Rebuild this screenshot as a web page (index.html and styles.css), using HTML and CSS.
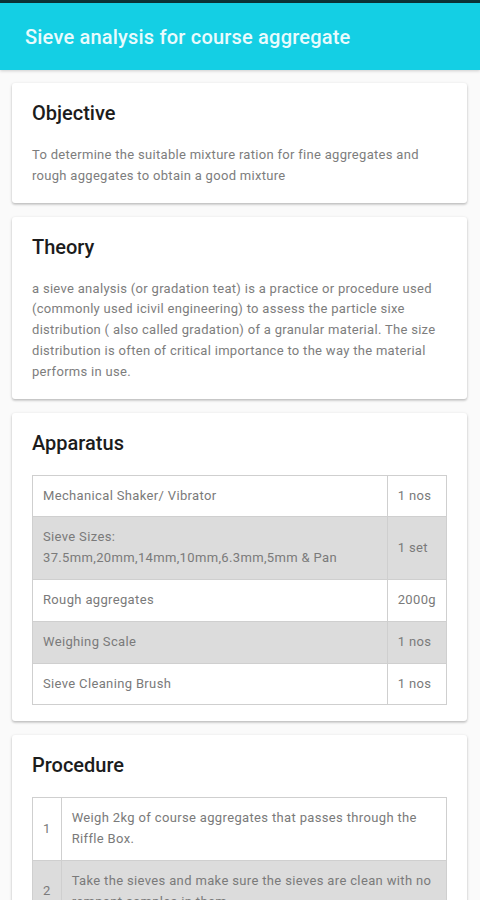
FILE: index.html
```html
<!DOCTYPE html>
<html>
<head>
<meta charset="utf-8">
<link rel="stylesheet" href="styles.css">
</head>
<body>
<div class="status"></div>
<header class="appbar"><h1 class="title">Sieve analysis for course aggregate</h1></header>
<main class="content">
  <section class="card">
    <h2 class="card-title">Objective</h2>
    <p class="card-text">To determine the suitable mixture ration for fine aggregates and rough aggegates to obtain a good mixture</p>
  </section>
  <section class="card">
    <h2 class="card-title">Theory</h2>
    <p class="card-text">a sieve analysis (or gradation teat) is a practice or procedure used (commonly used icivil engineering) to assess the particle sixe distribution ( also called gradation) of a granular material. The size distribution is often of critical importance to the way the material performs in use.</p>
  </section>
  <section class="card card-apparatus">
    <h2 class="card-title">Apparatus</h2>
    <table class="grid">
      <tr><td>Mechanical Shaker/ Vibrator</td><td class="qty">1 nos</td></tr>
      <tr><td>Sieve Sizes:<br>37.5mm,20mm,14mm,10mm,6.3mm,5mm &amp; Pan</td><td class="qty">1 set</td></tr>
      <tr><td>Rough aggregates</td><td class="qty">2000g</td></tr>
      <tr><td>Weighing Scale</td><td class="qty">1 nos</td></tr>
      <tr><td>Sieve Cleaning Brush</td><td class="qty">1 nos</td></tr>
    </table>
  </section>
  <section class="card">
    <h2 class="card-title">Procedure</h2>
    <table class="grid steps">
      <tr><td class="num">1</td><td>Weigh 2kg of course aggregates that passes through the Riffle Box.</td></tr>
      <tr><td class="num">2</td><td>Take the sieves and make sure the sieves are clean with no remnant samples in them.</td></tr>
      <tr><td class="num">3</td><td>Arrange the sieves in descending order of size with the pan at the bottom.</td></tr>
      <tr><td class="num">4</td><td>Pour the sample into the top sieve and place the lid.</td></tr>
    </table>
  </section>
</main>
</body>
</html>
```
FILE: styles.css
```css
* { box-sizing: border-box; }
html, body { margin: 0; padding: 0; }
body {
  background: #fafafa;
  font-family: Roboto, "Liberation Sans", Arial, sans-serif;
  width: 480px;
}
.status { height: 3px; background: #0c3236; }
.appbar {
  height: 67px;
  background: #14cfe4;
  display: flex;
  align-items: center;
  padding: 0 25px;
  box-shadow: 0 1px 3px rgba(0,0,0,0.18);
  position: relative;
}
.title {
  margin: 0;
  font-size: 20px;
  font-weight: 500;
  letter-spacing: 0.2px;
  color: #e9fbfd;
}
.content {
  display: flex;
  flex-direction: column;
  gap: 14px;
  padding: 13px 13px 20px 12px;
}
.card {
  background: #fff;
  border-radius: 3px;
  box-shadow: 0 1px 3px rgba(0,0,0,0.22), 0 2px 2px rgba(0,0,0,0.08);
  padding: 18px 20px 16px 20px;
}
.card-title {
  margin: 0 0 20px 0;
  font-size: 20px;
  line-height: 24px;
  font-weight: 500;
  color: #1c1c1c;
}
.card-text {
  margin: 0;
  font-size: 13px;
  line-height: 20.8px;
  letter-spacing: 0.3px;
  color: #7d7d7d;
}
.grid {
  width: 100%;
  border-collapse: collapse;
  border: 1px solid #c4c4c4;
  margin-top: 2px;
  font-size: 13px;
  line-height: 20.8px;
  letter-spacing: 0.35px;
  color: #7a7a7a;
}
.grid td {
  border: 1px solid #cfcfcf;
  padding: 10px 10px;
  vertical-align: middle;
}
.grid tr:nth-child(even) td { background: #dcdcdc; }
.grid .qty {
  width: 1%;
  white-space: nowrap;
  padding: 10px 10px;
}
.steps .num {
  width: 1%;
  text-align: center;
}
```
